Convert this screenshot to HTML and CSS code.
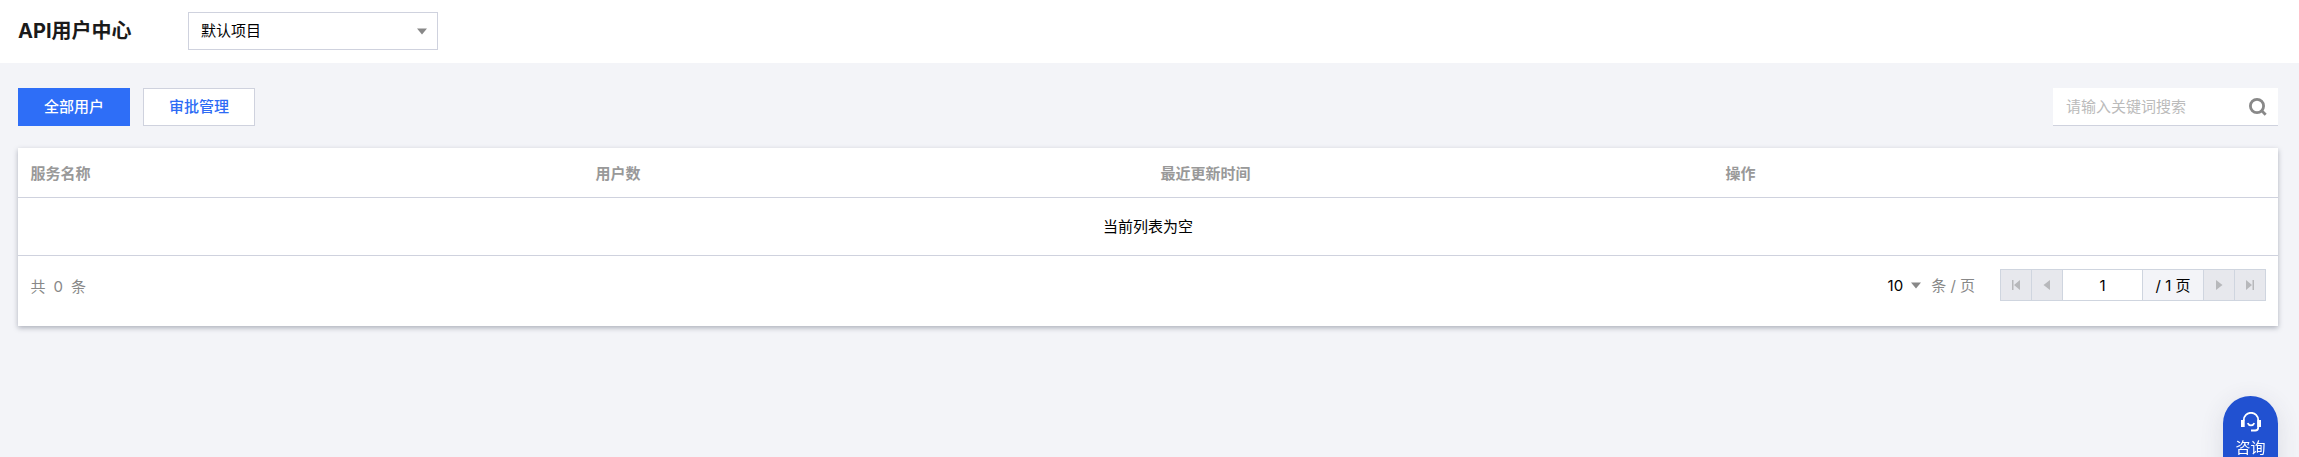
FILE: index.html
```html
<!DOCTYPE html>
<html lang="zh-CN">
<head>
  <meta charset="UTF-8">
  <title>API用户中心</title>
  <link rel="stylesheet" href="styles.css">
</head>
<body>

<header class="header">
  <h1 class="title">API用户中心</h1>
  <div class="select">
    <span>默认项目</span>
    <svg class="arrow" width="10" height="7" viewBox="0 0 10 7"><path d="M0 .5h10L5 6.5z"/></svg>
  </div>
</header>

<main class="main">
  <div class="toolbar">
    <button class="btn btn-primary">全部用户</button>
    <button class="btn">审批管理</button>
    <div class="search">
      <input type="text" class="search-input" placeholder="请输入关键词搜索">
      <svg class="search-icon" width="18" height="18" viewBox="0 0 18 18">
        <circle cx="8" cy="8" r="6.600"/>
        <path d="M12 12l4.700 4.700"/>
      </svg>
    </div>
  </div>

  <div class="card">
    <table class="table">
      <thead>
        <tr>
          <th>服务名称</th>
          <th>用户数</th>
          <th>最近更新时间</th>
          <th>操作</th>
        </tr>
      </thead>
      <tbody>
        <tr>
          <td class="empty" colspan="4">当前列表为空</td>
        </tr>
      </tbody>
    </table>

    <div class="footer">
      <div class="total"><span>共</span><span>0</span><span>条</span></div>
      <div class="page-size">
        <span class="size">10</span>
        <svg class="arrow" width="10" height="7" viewBox="0 0 10 7"><path d="M0 .5h10L5 6.5z"/></svg>
        <span class="unit">条 / 页</span>
      </div>
      <div class="pager">
        <button class="page-btn"><svg width="10" height="12" viewBox="0 0 10 12"><path d="M1 1h1.500v10H1zM9 1v10L3 6z"/></svg></button>
        <button class="page-btn"><svg width="10" height="12" viewBox="0 0 10 12"><path d="M8 1v10L1.500 6z"/></svg></button>
        <input type="text" class="page-input" value="1">
        <span class="page-count">/ 1 页</span>
        <button class="page-btn"><svg width="10" height="12" viewBox="0 0 10 12"><path d="M2 1v10L8.500 6z"/></svg></button>
        <button class="page-btn"><svg width="10" height="12" viewBox="0 0 10 12"><path d="M7.500 1H9v10H7.500zM1 1v10L7 6z"/></svg></button>
      </div>
    </div>
  </div>
</main>

<a class="consult">
  <svg width="20" height="20" viewBox="0 0 20 20">
    <path class="line" d="M2.800 8.500V8a7.200 7.200 0 0 1 14.400 0v7.500a3 3 0 0 1-3 3H10"/>
    <path class="ear" d="M0 8h3.700v7H0zM16.300 8H20v7h-3.700z"/>
    <path class="line" d="M6.700 11.200a3.600 3.600 0 0 0 6.600 0"/>
  </svg>
  <span>咨询</span>
</a>

</body>
</html>
```
FILE: styles.css
```css
* {
  box-sizing: border-box;
}

body {
  margin: 0;
  height: 457px;
  overflow: hidden;
  background: #f3f4f8;
  color: #000;
  font-family: Inter, "Noto Sans CJK SC", sans-serif;
  font-size: 15px;
  line-height: 22px;
}

button, input {
  font: inherit;
  border-radius: 0;
}

svg {
  display: block;
}

.header {
  display: flex;
  align-items: center;
  height: 63px;
  padding: 0 18px 1px;
  background: #fff;
}

.title {
  width: 170px;
  margin: 0;
  font-size: 20px;
  line-height: 30px;
  font-weight: 700;
  color: #1a1a1a;
}

.select {
  display: flex;
  align-items: center;
  justify-content: space-between;
  width: 250px;
  height: 38px;
  padding: 0 10px 0 12px;
  border: 1px solid #cfd2de;
}

.arrow {
  fill: #888;
}

.main {
  padding: 25px 21px 0 18px;
}

.toolbar {
  display: flex;
  gap: 13px;
  margin-bottom: 22px;
}

.btn {
  width: 112px;
  height: 38px;
  padding: 0;
  border: 1px solid #cfd2de;
  background: #fff;
  color: #2d6bf5;
  font-weight: 500;
}

.btn-primary {
  border-color: #2e6ef7;
  background: #2e6ef7;
  color: #fff;
}

.search {
  display: flex;
  align-items: center;
  width: 225px;
  height: 38px;
  margin-left: auto;
  padding: 0 11px 0 13px;
  border-bottom: 1px solid #cfd2de;
  background: #fff;
}

.search-input {
  flex: 1;
  min-width: 0;
  padding: 0;
  border: 0;
  outline: 0;
}

.search-input::placeholder {
  color: #bbb;
}

.search-icon {
  fill: none;
  stroke: #888;
  stroke-width: 2.8;
}

.card {
  height: 178px;
  background: #fff;
  box-shadow: 0 2px 5px rgba(54, 58, 80, 0.36);
}

.table {
  width: 100%;
  table-layout: fixed;
  border-collapse: separate;
  border-spacing: 0;
}

th, td {
  padding: 0 13px;
  border-bottom: 1px solid #cfd2de;
}

th {
  height: 50px;
  padding: 2px 12.5px 0;
  text-align: left;
  font-weight: 700;
  color: #999;
}

.empty {
  height: 58px;
  text-align: center;
}

.footer {
  display: flex;
  align-items: center;
  padding: 13px 12px 0 12.5px;
}

.total {
  display: flex;
  gap: 8px;
  margin-right: auto;
  padding-top: 3px;
  color: #888;
}

.page-size {
  display: flex;
  align-items: center;
  margin-right: 25px;
  padding-top: 1px;
}

.size {
  margin-right: 8px;
}

.unit {
  margin-left: 10px;
  color: #888;
}

.pager {
  display: flex;
  height: 32px;
  border: 1px solid #cfd5df;
}

.page-btn {
  display: flex;
  align-items: center;
  justify-content: center;
  width: 31px;
  padding: 0;
  border: 0;
  border-right: 1px solid #cfd5df;
  background: #e7e8ed;
  fill: #b7b8bb;
}

.page-btn:last-child {
  width: 30px;
  border-right: 0;
}

.page-input {
  width: 80px;
  padding: 1px 0 0;
  border: 0;
  border-right: 1px solid #cfd5df;
  outline: 0;
  text-align: center;
}

.page-count {
  width: 61px;
  padding-top: 1px;
  border-right: 1px solid #cfd5df;
  background: #f3f4f8;
  line-height: 29px;
  text-align: center;
}

/* floating entry in the bottom right corner */
.consult {
  position: fixed;
  top: 395.5px;
  right: 21px;
  display: flex;
  flex-direction: column;
  align-items: center;
  gap: 5px;
  width: 55px;
  height: 110px;
  padding-top: 16px;
  border-radius: 28px;
  background: #2151d1;
  box-shadow: 0 5px 25px rgba(54, 58, 80, 0.12);
  color: #fff;
}

.line {
  fill: none;
  stroke: #fff;
  stroke-width: 1.8;
}

.ear {
  fill: #fff;
}
```
